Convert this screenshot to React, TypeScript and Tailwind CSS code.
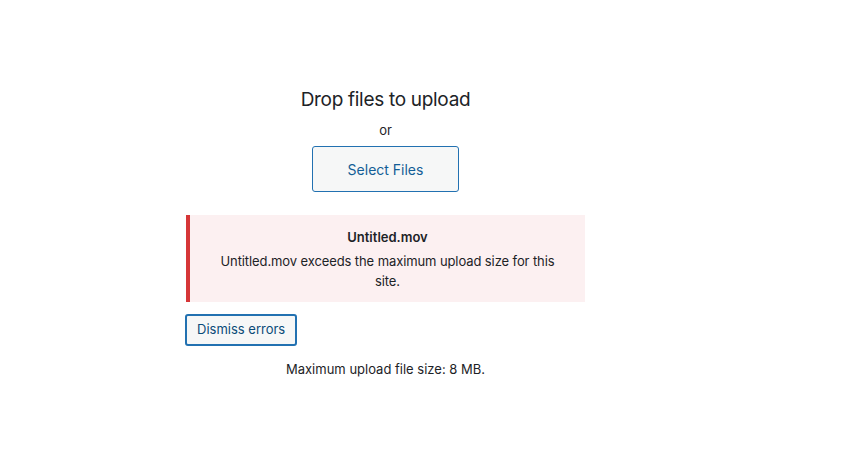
export default function App() {
  return (
    <div className="min-h-[458px] bg-white pl-[186px] pt-[87px] font-['Inter','Liberation_Sans',sans-serif] text-[#1d2327]">
      <div className="flex w-[399px] flex-col">
        <div className="flex flex-col items-center">
          <h2 className="text-[19px] leading-[26px] tracking-[-0.3px]">Drop files to upload</h2>
          <p className="mt-[8px] text-[13px] leading-[18px]">or</p>
          <button className="mt-[7px] h-[46px] w-[147px] rounded-[3px] border border-[#2271b1] bg-[#f6f7f7] text-[14px] text-[#135e96]">
            Select Files
          </button>
        </div>

        <div className="mt-[23px] border-l-4 border-[#d63638] bg-[#fcf0f1] px-[12px] pb-[11px] pt-[12px] text-center text-[13px] leading-[20px]">
          <div className="font-semibold">Untitled.mov</div>
          <p className="mt-[4px] px-[14px] tracking-[-0.1px]">
            Untitled.mov exceeds the maximum upload size for this site.
          </p>
        </div>

        <div>
          <button className="-ml-px mt-[12px] h-[32px] rounded-[3px] border-2 border-[#2271b1] bg-[#f6f7f7] px-[10px] text-[13px] text-[#0a4b78]">
            Dismiss errors
          </button>
        </div>

        <p className="mt-[14px] text-center text-[13px] leading-[18px]">
          Maximum upload file size: 8 MB.
        </p>
      </div>
    </div>
  );
}
